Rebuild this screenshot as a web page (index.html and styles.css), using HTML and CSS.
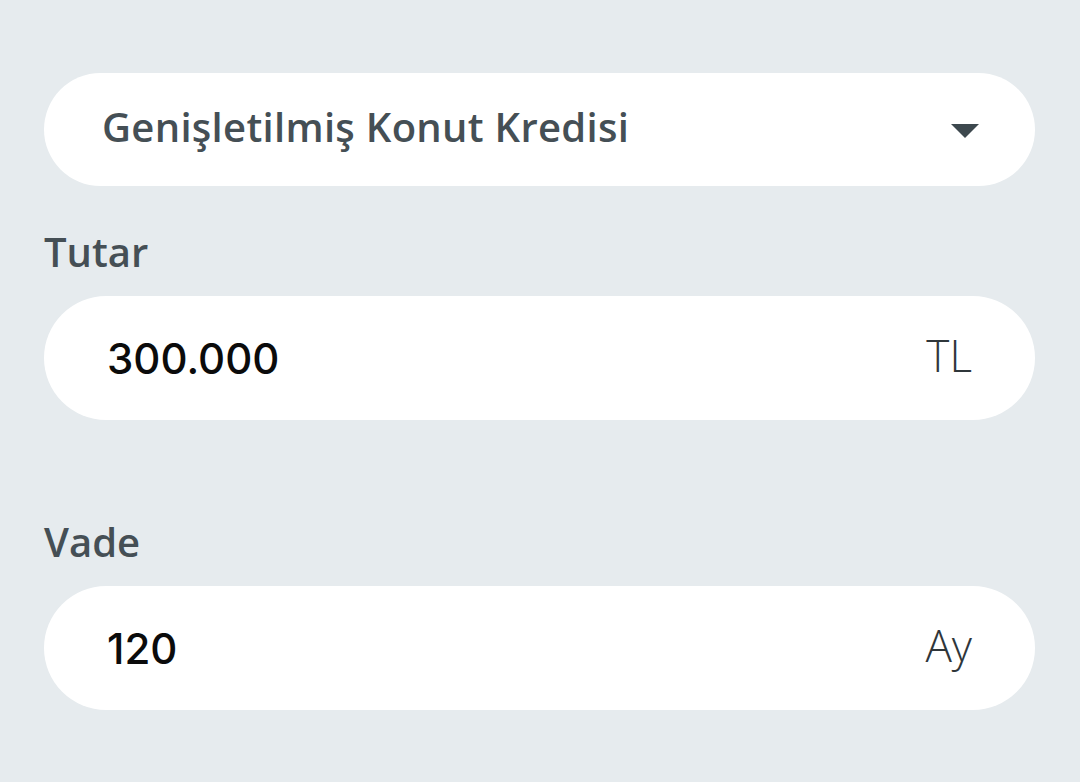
FILE: index.html
```html
<!DOCTYPE html>
<html lang="tr">
<head>
<meta charset="utf-8">
<title>Kredi Hesaplama</title>
<link rel="stylesheet" href="styles.css">
</head>
<body>
<main class="form">
  <div class="select-pill">
    <span class="select-text">Genişletilmiş Konut Kredisi</span>
    <svg class="caret" width="28" height="14" viewBox="0 0 28 14"><path d="M0 0H28L14 14Z" fill="#3d484e"/></svg>
  </div>

  <div class="field">
    <label class="field-label">Tutar</label>
    <div class="input-pill">
      <span class="value">300.000</span>
      <span class="unit">TL</span>
    </div>
  </div>

  <div class="field field-spaced">
    <label class="field-label">Vade</label>
    <div class="input-pill">
      <span class="value">120</span>
      <span class="unit">Ay</span>
    </div>
  </div>
</main>
</body>
</html>
```

FILE: styles.css
```css
html, body {
  margin: 0;
  padding: 0;
  background: #e6ebee;
}

body {
  width: 1080px;
  height: 782px;
  overflow: hidden;
  font-family: "Open Sans", "Noto Sans", sans-serif;
}

.form {
  padding: 73px 45px 0 44px;
  display: flex;
  flex-direction: column;
}

.select-pill {
  height: 113px;
  background: #fff;
  border-radius: 57px;
  display: flex;
  align-items: center;
  justify-content: space-between;
  padding: 0 56px 0 58px;
}

.select-text {
  font-size: 40px;
  font-weight: 600;
  color: #454f55;
  letter-spacing: 0.3px;
  margin-bottom: 6px;
}

.caret {
  display: block;
  margin-top: 2px;
}

.field {
  display: flex;
  flex-direction: column;
  margin-top: 40px;
}

.field-spaced {
  margin-top: 96px;
}

.field-label {
  font-size: 40px;
  font-weight: 600;
  color: #454f55;
  line-height: 52px;
  margin-bottom: 18px;
}

.input-pill {
  height: 124px;
  background: #fff;
  border-radius: 62px;
  display: flex;
  align-items: center;
  justify-content: space-between;
  padding: 0 63px 0 63px;
}

.value {
  font-family: "Inter", "Open Sans", sans-serif;
  font-size: 42px;
  font-weight: 500;
  color: #0b0b0b;
}

.unit {
  font-family: "Open Sans", sans-serif;
  font-size: 44px;
  font-weight: 300;
  color: #2f363a;
  margin-bottom: 6px;
}
```
